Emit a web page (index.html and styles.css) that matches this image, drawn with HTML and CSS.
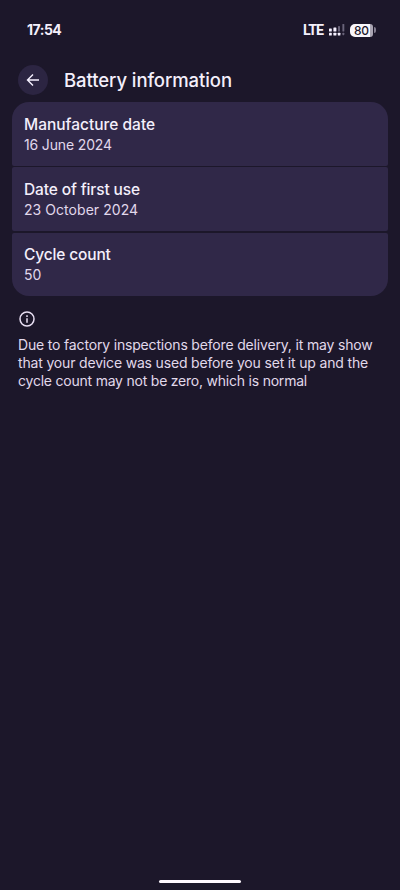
FILE: index.html
```html
<!DOCTYPE html>
<html lang="en">
<head>
<meta charset="utf-8">
<title>Battery information</title>
<link rel="stylesheet" href="styles.css">
</head>
<body>
<div class="screen">
  <header class="status">
    <span class="time">17:54</span>
    <div class="indicators">
      <span class="network">LTE</span>
      <svg class="signal" width="16" height="12" viewBox="0 0 16 12">
        <g fill="#f6f1ff">
          <rect x="0" y="4.5" width="2.8" height="3" rx=".6"/><rect x="0" y="8.7" width="2.8" height="2.8" rx=".6"/>
          <rect x="4.4" y="3.4" width="3" height="4.2" rx=".6"/><rect x="4.4" y="8.7" width="3" height="2.8" rx=".6"/>
          <rect x="8.8" y="8.7" width="2.6" height="2.8" rx=".6"/>
        </g>
        <g fill="#6a647a">
          <rect x="9" y="2" width="2" height="5.6" rx=".6"/>
          <rect x="13.4" y="0" width="1.9" height="7.6" rx=".6"/><rect x="13.4" y="8.7" width="1.9" height="2.5" rx=".6"/>
        </g>
      </svg>
      <div class="battery"><span class="level">80</span><span class="tip"></span></div>
    </div>
  </header>
  <div class="titlebar">
    <div class="back">
      <svg width="14" height="14" viewBox="0 0 14 14" fill="none" stroke="#f6f1ff" stroke-width="1.4"><path d="M13 7H1.8M7 1.5L1.5 7L7 12.5"/></svg>
    </div>
    <h1>Battery information</h1>
  </div>
  <main>
    <section class="cards">
      <div class="card"><h2 class="made">Manufacture date</h2><p class="made-value">16 June 2024</p></div>
      <div class="card"><h2 class="used">Date of first use</h2><p class="used-value">23 October 2024</p></div>
      <div class="card"><h2 class="cycles">Cycle count</h2><p class="cycles-value">50</p></div>
    </section>
    <footer class="note">
      <svg width="16" height="16" viewBox="0 0 16 16" fill="none" stroke="#e8dff3" stroke-width="1.5"><circle cx="8" cy="8" r="7"/><path d="M8 7.2V11.7M8 4.3V5.9"/></svg>
      <p><span class="line1">Due to factory inspections before delivery, it may show</span><br><span class="line2">that your device was used before you set it up and the</span><br><span class="line3">cycle count may not be zero, which is normal</span></p>
    </footer>
  </main>
  <div class="home"></div>
</div>
</body>
</html>
```
FILE: styles.css
```css
* { box-sizing: border-box; margin: 0; padding: 0; }
body { background: #1c172a; color: #f4effb; font-family: Inter, "Open Sans", sans-serif; }
svg { display: block; flex: none; }
.screen { width: 400px; height: 890px; display: flex; flex-direction: column; }
.status { height: 60px; padding: 0 24px 0 27px; display: flex; align-items: center; justify-content: space-between; }
.time { font-size: 14px; font-weight: 700; letter-spacing: -.5px; margin-top: -2px; }
.indicators { display: flex; align-items: center; }
.network { font: 700 15px Roboto, sans-serif; letter-spacing: -1px; margin-right: 6px; transform: scaleX(.95); transform-origin: right; }
.signal { margin-right: 5px; }
.battery { width: 26px; height: 13px; display: flex; align-items: center; }
.level { width: 23px; height: 13px; border-radius: 5px 3px 3px 5px; background: linear-gradient(90deg, #f8f6fb 20px, #aaa5b3 20px); color: #1c172a; font-size: 12px; font-weight: 500; line-height: 13px; padding-left: 4px; letter-spacing: -.2px; }
.level + .tip { width: 2px; height: 6px; margin-left: 1px; border-radius: 0 2px 2px 0; background: #827c8e; }
.titlebar { height: 42px; padding: 5px 18px 0; display: flex; align-items: flex-start; gap: 16px; }
.back { width: 30px; height: 30px; border-radius: 50%; background: #2c2542; display: flex; align-items: center; justify-content: center; }
h1 { font-size: 18.5px; font-weight: 500; line-height: 30px; letter-spacing: -.08px; white-space: nowrap; }
main { flex: 1; padding: 0 12px; }
.cards { display: grid; grid-template-rows: repeat(3, 63.6px); gap: 1.8px; border-radius: 17px; overflow: hidden; }
.card { background: #302848; border-radius: 2px; padding: 12.5px 12px 0; }
.card h2 { font-size: 15.5px; font-weight: 500; line-height: 20px; width: fit-content; }
.card h2.used { letter-spacing: -.12px; }
.card h2.cycles { letter-spacing: -.15px; }
.card p { font-size: 14px; line-height: 19px; color: #e1d8ec; width: fit-content; }
.card p.made-value { letter-spacing: -.15px; }
.card p.used-value { letter-spacing: .05px; }
.note { padding: 15px 6px 0; }
.note svg { margin-left: 1px; }
.note p { margin-top: 8.5px; font-size: 14px; line-height: 18px; color: #e1d9eb; white-space: nowrap; letter-spacing: -.17px; }
.line3 { letter-spacing: -.22px; }
.home { width: 82px; height: 3px; margin: 0 auto 7px; border-radius: 2px; background: #fff9ff; }
```
